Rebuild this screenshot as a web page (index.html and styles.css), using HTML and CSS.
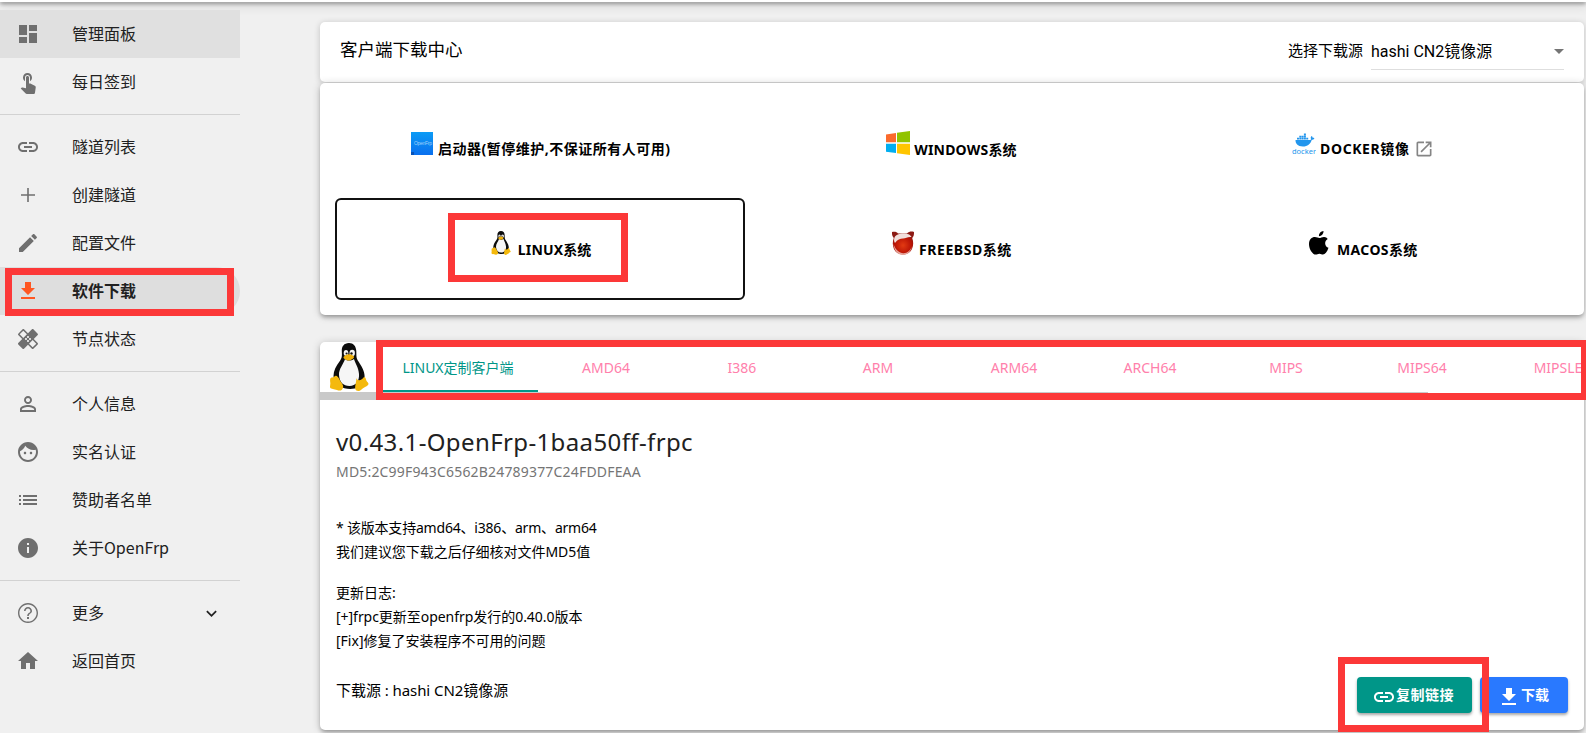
FILE: index.html
```html
<!DOCTYPE html>
<html lang="zh-CN">
<head>
<meta charset="utf-8">
<title>OpenFrp</title>
<link rel="stylesheet" href="styles.css">
</head>
<body>
<svg class="defs" width="0" height="0">
  <defs>
    <linearGradient id="launch" x1="0" y1="0" x2="0" y2="1"><stop offset="0" stop-color="#0b9bf5"/><stop offset="1" stop-color="#0a6fee"/></linearGradient>
    <radialGradient id="orb" cx=".5" cy=".6" r=".55"><stop offset="0" stop-color="#e23a12"/><stop offset=".7" stop-color="#b81205"/><stop offset="1" stop-color="#8c1a14"/></radialGradient>
    <symbol id="link" viewBox="0 0 24 24"><path d="M3.9 12c0-1.71 1.39-3.1 3.1-3.1h4V7H7c-2.76 0-5 2.24-5 5s2.24 5 5 5h4v-1.9H7c-1.71 0-3.1-1.39-3.1-3.1zM8 13h8v-2H8v2zm9-6h-4v1.900h4c1.710 0 3.100 1.390 3.100 3.100s-1.390 3.100-3.100 3.100h-4V17h4c2.760 0 5-2.240 5-5s-2.240-5-5-5z"/></symbol>
    <symbol id="down" viewBox="0 0 24 24"><path d="M19 9h-4V3H9v6H5l7 7 7-7zM5 18v2h14v-2H5z"/></symbol>
    <symbol id="tux" viewBox="0 0 40 48">
      <path d="M20 0c-5 0-7.500 3.500-7.200 8.500.2 4.500.4 6.500-2.300 10C7 23 4.500 28 4.500 33c0 4 2 7 6 10 5 3.500 14 4 19 1 5-3 6.500-7 6-12-.5-6-4.500-11-7-15-1.500-2.500-1-5-1.200-9C27 3 24.500 0 20 0z" fill="#0c0c0c"/>
      <path d="M16 16c2 2 6 2 9 0 1 4 4.500 8 5 15 .5 7-3 12-9.500 12S10.500 39 10 32c-.3-6 4.500-11 6-16z" fill="#f6f6f6"/>
      <ellipse cx="17" cy="10" rx="2.300" ry="3" fill="#f4f4f4"/><ellipse cx="23.200" cy="10" rx="2.700" ry="3.200" fill="#f4f4f4"/>
      <circle cx="17.600" cy="10.500" r="1.100" fill="#111"/><circle cx="22.500" cy="10.500" r="1.200" fill="#111"/>
      <path d="M14.500 14c1-1.500 3.500-2.800 5.500-2.800s5 1.500 5 2.800c0 1.500-3.500 3.500-5.500 3.500S14 15.500 14.500 14z" fill="#efb20c"/>
      <path d="M2.500 34.500c2.500.3 3-2 4.500-1.800 2.500.5 3.500 4.300 5 6.300 1.500 2.200 2.600 3.600 2 5.700-.8 3-3.500 3.300-6 2.300-2.500-1-6-.8-6.800-2.200-.7-1.300.4-3 .1-5-.3-2.600-.5-4.700 1.200-5.300zM27.500 35c.8 3.500 5.500 2.500 7.500-1 1.800-.3 1.800 2.800 2.800 4.300 1 1.200 2.200 2 1.400 3.400-1 1.500-5 3-7 5-2 1.900-5.300 1.500-6-1-.5-2.500 1-6 1.300-10.700z" fill="#f4b90d"/>
    </symbol>
  </defs>
</svg>

<header class="topbar"></header>

<div class="layout">
  <nav class="sidebar">
    <div class="item hover"><svg viewBox="0 0 24 24"><path d="M3 13h8V3H3v10zm0 8h8v-6H3v6zm10 0h8V11h-8v10zm0-18v6h8V3h-8z"/></svg><span>管理面板</span></div>
    <div class="item"><svg viewBox="0 0 24 24"><path d="M9 11.240V7.500C9 6.120 10.120 5 11.500 5S14 6.120 14 7.500v3.740c1.210-.81 2-2.180 2-3.740C16 5.010 13.990 3 11.500 3S7 5.010 7 7.500c0 1.560.79 2.930 2 3.740zm9.840 4.630l-4.540-2.260c-.17-.07-.35-.11-.54-.11H13v-6c0-.83-.67-1.500-1.500-1.500S10 6.670 10 7.500v10.740l-3.430-.72c-.08-.01-.15-.03-.24-.03-.31 0-.59.13-.79.33l-.79.8 4.940 4.940c.27.27.65.44 1.060.44h6.790c.75 0 1.330-.55 1.440-1.280l.75-5.270c.01-.07.02-.14.02-.2 0-.62-.38-1.160-.91-1.380z"/></svg><span>每日签到</span></div>
    <hr>
    <div class="item"><svg><use href="#link"/></svg><span>隧道列表</span></div>
    <div class="item"><svg viewBox="0 0 24 24"><path d="M19 12.800h-6.200V19h-1.600v-6.200H5v-1.600h6.200V5h1.600v6.200H19z"/></svg><span>创建隧道</span></div>
    <div class="item"><svg viewBox="0 0 24 24"><path d="M3 17.250V21h3.750L17.810 9.940l-3.750-3.750L3 17.250zM20.710 7.040c.39-.39.39-1.020 0-1.410l-2.340-2.340c-.39-.39-1.020-.39-1.410 0l-1.830 1.830 3.750 3.750 1.830-1.830z"/></svg><span>配置文件</span></div>
    <div class="item active"><svg><use href="#down"/></svg><span>软件下载</span></div>
    <div class="item"><svg viewBox="0 0 24 24"><path d="M17.730 12.020l3.980-3.980c.39-.39.39-1.020 0-1.410l-4.340-4.340c-.39-.39-1.020-.39-1.410 0l-3.980 3.980L8 2.290C7.800 2.100 7.550 2 7.290 2c-.25 0-.51.1-.7.290L2.250 6.630c-.39.39-.39 1.020 0 1.410l3.980 3.980L2.250 16c-.39.39-.39 1.020 0 1.410l4.340 4.340c.39.39 1.020.39 1.410 0l3.980-3.980 3.980 3.980c.2.2.45.29.71.29.26 0 .51-.1.71-.29l4.340-4.340c.39-.39.39-1.020 0-1.410l-3.990-3.980zM12 9c.55 0 1 .45 1 1s-.45 1-1 1-1-.45-1-1 .45-1 1-1zm-4.710 1.960L3.660 7.340l3.630-3.630 3.620 3.620-3.620 3.630zM10 13c-.55 0-1-.45-1-1s.45-1 1-1 1 .45 1 1-.45 1-1 1zm2 2c-.55 0-1-.45-1-1s.45-1 1-1 1 .45 1 1-.45 1-1 1zm2-4c.55 0 1 .45 1 1s-.45 1-1 1-1-.45-1-1 .45-1 1-1zm2.660 9.340l-3.630-3.620 3.630-3.630 3.620 3.620-3.620 3.630z"/></svg><span>节点状态</span></div>
    <hr>
    <div class="item"><svg viewBox="0 0 24 24"><path d="M12 5.900c1.160 0 2.100.94 2.100 2.100s-.94 2.100-2.100 2.100S9.900 9.160 9.900 8s.94-2.100 2.100-2.100m0 9c2.970 0 6.100 1.460 6.100 2.100v1.100H5.900V17c0-.64 3.130-2.100 6.100-2.100M12 4C9.790 4 8 5.790 8 8s1.790 4 4 4 4-1.790 4-4-1.790-4-4-4zm0 9c-2.670 0-8 1.340-8 4v3h16v-3c0-2.660-5.330-4-8-4z"/></svg><span>个人信息</span></div>
    <div class="item"><svg viewBox="0 0 24 24"><path d="M9 11.750c-.69 0-1.250.56-1.250 1.250s.56 1.250 1.250 1.250 1.250-.56 1.250-1.250-.56-1.250-1.250-1.250zm6 0c-.69 0-1.250.56-1.250 1.250s.56 1.250 1.250 1.250 1.250-.56 1.250-1.250-.56-1.250-1.250-1.250zM12 2C6.480 2 2 6.480 2 12s4.480 10 10 10 10-4.480 10-10S17.520 2 12 2zm0 18c-4.410 0-8-3.590-8-8 0-.29.02-.58.05-.86 2.360-1.050 4.230-2.980 5.210-5.370C11.070 8.330 14.050 10 17.420 10c.78 0 1.530-.09 2.250-.26.21.71.33 1.470.33 2.260 0 4.410-3.590 8-8 8z"/></svg><span>实名认证</span></div>
    <div class="item"><svg viewBox="0 0 24 24"><path d="M3 13h2v-2H3v2zm0 4h2v-2H3v2zm0-8h2V7H3v2zm4 4h14v-2H7v2zm0 4h14v-2H7v2zM7 7v2h14V7H7z"/></svg><span>赞助者名单</span></div>
    <div class="item"><svg viewBox="0 0 24 24"><path d="M12 2C6.480 2 2 6.480 2 12s4.480 10 10 10 10-4.480 10-10S17.520 2 12 2zm1 15h-2v-6h2v6zm0-8h-2V7h2v2z"/></svg><span>关于OpenFrp</span></div>
    <hr>
    <div class="item"><svg viewBox="0 0 24 24"><path d="M11 18h2v-2h-2v2zm1-16C6.480 2 2 6.480 2 12s4.480 10 10 10 10-4.480 10-10S17.520 2 12 2zm0 18.600c-4.750 0-8.600-3.850-8.600-8.600S7.250 3.400 12 3.400s8.600 3.850 8.600 8.600-3.850 8.600-8.600 8.600zM12 6c-2.210 0-4 1.790-4 4h1.600c0-1.320 1.080-2.400 2.400-2.400s2.400 1.080 2.400 2.400c0 2-3.200 1.900-3.200 5h1.600c0-2.250 3.200-2.500 3.200-5 0-2.210-1.790-4-4-4z"/></svg><span>更多</span><svg class="chev" viewBox="0 0 24 24"><path d="M16.590 8.590L12 13.170 7.410 8.590 6 10l6 6 6-6z"/></svg></div>
    <div class="item"><svg viewBox="0 0 24 24"><path d="M10 20v-6h4v6h5v-8h3L12 3 2 12h3v8z"/></svg><span>返回首页</span></div>
  </nav>

  <main class="content">
    <section class="card head">
      <h1 class="title">客户端下载中心</h1>
      <label class="src-label">选择下载源</label>
      <div class="select"><span>hashi CN2镜像源</span><i class="arrow"></i></div>
    </section>

    <section class="card systems">
      <div class="sys"><svg class="logo" viewBox="0 0 24 24"><rect x="1" y="1" width="22" height="23" fill="url(#launch)"/><rect x="1" y="21" width="3" height="3" fill="#0752b8"/><text x="4" y="13.500" class="launch-text" textLength="18">OpenFrp</text></svg><span class="n-launch">启动器(暂停维护,不保证所有人可用)</span></div>
      <div class="sys"><svg class="logo" viewBox="0 0 24 24"><path d="M0 3.400l10-1.400v9.300H0z" fill="#fb6a2c"/><path d="M11 1.800L24 0v11.300H11z" fill="#91c300"/><path d="M0 12.700h10V22L0 20.800z" fill="#02aef0"/><path d="M11 12.700h13V24l-13-1.800z" fill="#ffc500"/></svg><span class="n-win">WINDOWS系统</span></div>
      <div class="sys docker"><svg class="logo" viewBox="0 0 24 24"><path d="M3.500 9h14.800c.8-.2.900-1 .4-2 0-1 .6-1.700 1-2 .8.600 1 1.200 1.100 1.900.6-.1 1.200 0 1.600.3-.5 1-1.400 1.500-2.600 1.500C18.500 13 15.500 15.500 11 15.500 5.500 15.500 3.400 12.500 3.500 9zM5 6.800h2v1.800H5zm2.300 0h2v1.800h-2zm2.300 0h2v1.800h-2zm2.300 0h2v1.800h-2zm2.300 0h2v1.800h-2zM7.300 4.700h2v1.800h-2zm2.300 0h2v1.800h-2zm2.300 0h2v1.800h-2zm0-2.100h2v1.800h-2z" fill="#2396ed"/><text x="0" y="22.600" class="docker-text" textLength="24" lengthAdjust="spacingAndGlyphs">docker</text></svg><span class="n-docker">DOCKER镜像</span><svg class="ext" viewBox="0 0 24 24"><path d="M19 19H5V5h7V3H5c-1.110 0-2 .9-2 2v14c0 1.100.89 2 2 2h14c1.100 0 2-.9 2-2v-7h-2v7zM14 3v2h3.590l-9.830 9.830 1.410 1.410L19 6.410V10h2V3h-7z"/></svg></div>
      <div class="sys selected"><svg class="logo tux-small"><use href="#tux"/></svg><span class="n-linux">LINUX系统</span></div>
      <div class="sys"><svg class="logo" viewBox="0 0 24 24"><path d="M1 1c3-.7 5 0 6 1.500h9C18 .5 20.500.2 23 1c.2 3-.6 5-1.800 6C24 14 21 23.500 12 23.500S0 14 2.800 7C1.500 5.500.8 4 1 1z" fill="url(#orb)"/><path d="M3.500 6.500C5.500 1.500 18.500 1 20.500 6c-4-.4-5.500 1.200-8.500 1.500S6.500 8.500 4 12C2.800 10.500 2.900 8 3.500 6.500z" fill="#f1dfdc"/><path d="M2.500 13c2 6 6 9.300 10 9.200 4-.1 7-3 8.500-7-2 8-6.500 8.700-9 8.700-5 0-9-4-9.500-10.900z" fill="#e5a59b"/></svg><span class="n-bsd">FREEBSD系统</span></div>
      <div class="sys"><svg class="logo" viewBox="0 0 24 24"><path d="M15.500 0c.2 2.800-2 5.200-4.500 5.200C10.700 2.400 13 .2 15.500 0zM19.700 7.900c-3.700 2.200-3.200 7.300.8 8.900C19 21.200 17 23.600 15 23.600c-1.300 0-2-.8-3.600-.8s-2.400.8-3.700.8C4.500 23.600 1 18 1 13.200 1 8.400 3.800 6 6.900 6c1.900 0 3.200 1 4.500 1 1.200 0 2.700-1.200 4.800-1.100 1.500.1 2.700.8 3.500 2z"/></svg><span class="n-mac">MACOS系统</span></div>
    </section>

    <section class="card downloads">
      <div class="tabbar">
        <svg class="tux-big"><use href="#tux"/></svg>
        <div class="tabs">
          <span class="tab current">LINUX定制客户端</span><span class="tab">AMD64</span><span class="tab">I386</span><span class="tab">ARM</span><span class="tab">ARM64</span><span class="tab">ARCH64</span><span class="tab">MIPS</span><span class="tab">MIPS64</span><span class="tab last">MIPSLE</span>
        </div>
      </div>
      <div class="rail"></div>
      <div class="details">
        <h2 class="version"><span>v0.43.1-OpenFrp-1baa50ff-frpc</span></h2>
        <p class="md5"><span>MD5:2C99F943C6562B24789377C24FDDFEAA</span></p>
        <div class="notes">
          <p><span class="l1">* 该版本支持amd64、i386、arm、arm64</span><br><span class="l2">我们建议您下载之后仔细核对文件MD5值</span></p>
          <p>更新日志:<br><span class="l3">[+]frpc更新至openfrp发行的0.40.0版本</span><br><span class="l4">[Fix]修复了安装程序不可用的问题</span></p>
        </div>
        <div class="foot">
          <span class="source">下载源 : hashi CN2镜像源</span>
          <button class="btn copy"><svg><use href="#link"/></svg><span>复制链接</span></button>
          <button class="btn get"><svg><use href="#down"/></svg><span>下载</span></button>
        </div>
      </div>
    </section>
  </main>
</div>

<div class="mark mark-menu"></div>
<div class="mark mark-linux"></div>
<div class="mark mark-tabs"></div>
<div class="mark mark-copy"></div>
</body>
</html>
```
FILE: styles.css
```css
* { box-sizing: border-box; }
body {
  margin: 0;
  width: 1586px;
  height: 733px;
  overflow: hidden;
  position: relative;
  background: #f0f0f0;
  color: #000;
  font-family: "Noto Sans", "Noto Sans CJK SC", sans-serif;
}
h1, h2, p { margin: 0; font-weight: 400; }
.defs { position: absolute; }
.topbar { height: 2px; background: #fff; box-shadow: 0 1px 4px rgba(0,0,0,.75), 0 4px 8px rgba(0,0,0,.25); }

.layout { display: flex; gap: 80px; }
.sidebar { width: 240px; flex: none; padding-top: 8px; }
.sidebar hr { margin: 8px 0; height: 1px; border: 0; background: #d2d2d2; }
.item {
  height: 48px; padding-left: 16px;
  display: flex; align-items: center; gap: 32px;
  font: 16px/24px "Noto Sans CJK SC", sans-serif; color: #212121;
}
.item svg { width: 24px; height: 24px; fill: #6f6f6f; flex: none; }
.item span { padding-bottom: 3px; white-space: nowrap; }
.item .chev { width: 21px; height: 21px; fill: #222; margin-left: auto; margin-right: 18px; }
.hover { background: #e0e0e0; }
.active { background: #dedede; border-radius: 0 24px 24px 0; font-weight: 700; }
.active svg { fill: #ff5722; }

.content { width: 1264px; flex: none; padding-top: 20px; }
.card { background: #fff; border-radius: 5px; box-shadow: 0 3px 4px -1px rgba(0,0,0,.3), 0 1px 8px rgba(0,0,0,.2); }
.head { height: 60px; margin-bottom: 1px; padding: 0 20px; display: flex; align-items: flex-start; box-shadow: 0 1px 6px rgba(0,0,0,.2); }
.title { flex: 1; font-size: 17.500px; line-height: 24px; padding-top: 15px; }
.src-label { font-size: 15px; line-height: 24px; padding-top: 16px; margin-right: 8px; }
.select {
  width: 193px; height: 39px; margin-top: 9px; border-bottom: 1px solid #dedede;
  display: flex; justify-content: space-between; align-items: center;
  font: 16px/24px Roboto, "Noto Sans CJK SC", sans-serif;
}
.select span { padding-top: 4px; }
.arrow { border: 5px solid transparent; border-top-color: #757575; border-bottom: 0; margin-top: 3px; }

.systems { height: 232px; padding: 15px; display: grid; grid-template-columns: repeat(3, 1fr); grid-template-rows: 100px 102px; }
.sys {
  display: flex; justify-content: center; gap: 4px;
  padding: 33px 0 0 0; margin-right: 1px; border-radius: 6px;
  font-size: 14px; line-height: 22px; font-weight: 700; white-space: nowrap;
}
.sys span { margin-top: 8px; }
.sys .n-launch { letter-spacing: .5px; margin-top: 7px; }
.sys .n-win { letter-spacing: .2px; }
.sys .n-docker { letter-spacing: .6px; margin-top: 7px; }
.sys .n-linux { letter-spacing: .15px; margin-left: 1px; }
.sys .n-bsd { letter-spacing: .55px; }
.sys .n-mac { letter-spacing: .35px; margin-left: 1px; }
.selected { border: 2px solid #111; padding-top: 31px; }
.logo { width: 24px; height: 24px; flex: none; }
.ext { width: 20px; height: 20px; fill: #858585; margin: 8px 0 0 0; }
.launch-text { font: 5px "Liberation Sans", sans-serif; fill: #9fd0fb; }
.docker-text { font: 400 7.500px "Noto Sans", sans-serif; fill: #2396ed; }

.downloads { height: 388px; margin-top: 27px; }
.tabbar { height: 50px; display: flex; overflow: hidden; }
.tux-big { width: 40px; height: 48px; margin: 1px 9px 0; flex: none; }
.tabs { display: flex; flex: none; }
.tab {
  width: 136px; height: 50px; text-align: center; color: #ff80ab;
  font-size: 14px; line-height: 50px; padding-top: 1px; white-space: nowrap;
}
.current { width: 160px; color: #009688; border-bottom: 2px solid #009688; }
.rail { width: 1108px; height: 8px; background: #c9c9c9; }
.details { padding: 25px 16px 0; }
.version { font-size: 24px; line-height: 34px; color: #212121; letter-spacing: .38px; }
.md5 { font-size: 14px; line-height: 24px; color: #757575; letter-spacing: .18px; margin-top: 1px; }
.notes { margin-top: 32px; font-size: 14px; line-height: 24px; }
.notes p { margin-bottom: 17px; }
.l1 { letter-spacing: -.2px; }
.l2, .l3 { letter-spacing: -.04px; }
.foot { display: flex; margin-top: 24px; }
.source { flex: 1; font-size: 15px; line-height: 26px; letter-spacing: -.06px; }
.btn {
  height: 36px; border: 0; border-radius: 4px; padding: 0; color: #fff;
  display: flex; align-items: center; justify-content: center;
  font: 700 14px/20px "Noto Sans CJK SC", sans-serif;
  box-shadow: 0 2px 3px rgba(0,0,0,.35);
}
.btn svg { fill: #fff; width: 24px; height: 24px; margin-top: 3px; }
.btn span { padding-bottom: 2px; }
.copy { width: 115px; background: #009688; letter-spacing: .5px; padding-right: 3px; }
.get { width: 88px; margin-left: 8px; background: #2979ff; padding-right: 2px; }

.mark { position: absolute; border: 7px solid #fc3838; }
.mark-menu { left: 5px; top: 268px; width: 229px; height: 48px; }
.mark-linux { left: 448px; top: 213px; width: 180px; height: 69px; }
.mark-tabs { left: 376px; top: 340px; width: 1212px; height: 60px; }
.mark-copy { left: 1338px; top: 657px; width: 151px; height: 75px; }
```
